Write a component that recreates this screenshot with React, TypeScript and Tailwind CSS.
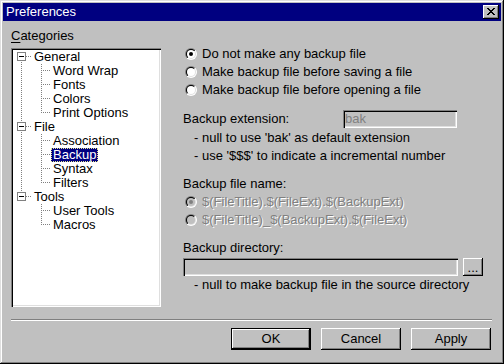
import React from "react";

const sunken =
  "shadow-[inset_1px_1px_#808080,inset_2px_2px_#000,inset_-1px_-1px_#fff,inset_-2px_-2px_#dfdfdf]";
const raised =
  "shadow-[inset_-1px_-1px_#000,inset_1px_1px_#fff,inset_-2px_-2px_#808080]";
const disabledText = "text-[#808080] [text-shadow:1px_1px_0_#fff]";

function Radio({ checked, disabled }: { checked?: boolean; disabled?: boolean }) {
  return (
    <svg width="12" height="12" viewBox="0 0 12 12" className="shrink-0">
      <defs>
        <linearGradient id="rOuter" x1="0" y1="0" x2="1" y2="1">
          <stop offset="0.5" stopColor="#808080" />
          <stop offset="0.5" stopColor="#ffffff" />
        </linearGradient>
        <linearGradient id="rInner" x1="0" y1="0" x2="1" y2="1">
          <stop offset="0.5" stopColor="#000000" />
          <stop offset="0.5" stopColor="#dfdfdf" />
        </linearGradient>
      </defs>
      <circle cx="6" cy="6" r="6" fill="url(#rOuter)" />
      <circle cx="6" cy="6" r="5" fill="url(#rInner)" />
      <circle cx="6" cy="6" r="4" fill={disabled ? "#c0c0c0" : "#ffffff"} />
      {checked && <circle cx="6" cy="6" r="2" fill={disabled ? "#808080" : "#000"} />}
    </svg>
  );
}

function RadioRow({ label, checked, disabled }: { label: string; checked?: boolean; disabled?: boolean }) {
  return (
    <div className="flex h-[18px] items-center gap-[5px] pl-[2px]">
      <Radio checked={checked} disabled={disabled} />
      <span className={disabled ? disabledText : ""}>{label}</span>
    </div>
  );
}

function TopConnector({ first, last }: { first?: boolean; last?: boolean }) {
  return (
    <svg width="19" height="14" className="shrink-0" shapeRendering="crispEdges">
      {!first && <line x1="8.5" y1="0" x2="8.5" y2="2" stroke="#808080" strokeDasharray="1 1" />}
      {!last && <line x1="8.5" y1="12" x2="8.5" y2="14" stroke="#808080" strokeDasharray="1 1" />}
      <rect x="4.5" y="2.5" width="8" height="8" fill="#fff" stroke="#808080" />
      <line x1="6" y1="6.5" x2="11" y2="6.5" stroke="#000" />
      <line x1="13" y1="6.5" x2="18" y2="6.5" stroke="#808080" strokeDasharray="1 1" />
    </svg>
  );
}

function ChildConnector({ through, last }: { through?: boolean; last?: boolean }) {
  return (
    <svg width="38" height="14" className="shrink-0" shapeRendering="crispEdges">
      {through && <line x1="8.5" y1="0" x2="8.5" y2="14" stroke="#808080" strokeDasharray="1 1" />}
      <line x1="28.5" y1="0" x2="28.5" y2={last ? 7 : 14} stroke="#808080" strokeDasharray="1 1" />
      <line x1="30" y1="6.5" x2="38" y2="6.5" stroke="#808080" strokeDasharray="1 1" />
    </svg>
  );
}

function Label({ text, selected }: { text: string; selected?: boolean }) {
  return (
    <span
      className={
        selected
          ? "h-[14px] border border-dotted border-[#e8e890] bg-[#000080] px-[1px] leading-[12px] text-white"
          : "h-[14px] border border-transparent px-[1px] leading-[12px]"
      }
    >
      {text}
    </span>
  );
}

const tree = [
  { name: "General", children: ["Word Wrap", "Fonts", "Colors", "Print Options"] },
  { name: "File", children: ["Association", "Backup", "Syntax", "Filters"] },
  { name: "Tools", children: ["User Tools", "Macros"] },
];

function Tree() {
  return (
    <div className={`h-[259px] bg-white p-[2px] ${sunken}`}>
      {tree.map((g, gi) => {
        const lastGroup = gi === tree.length - 1;
        return (
          <div key={g.name}>
            <div className="flex h-[14px] items-center">
              <TopConnector first={gi === 0} last={lastGroup} />
              <Label text={g.name} />
            </div>
            {g.children.map((c, ci) => (
              <div key={c} className="flex h-[14px] items-center">
                <ChildConnector through={!lastGroup} last={ci === g.children.length - 1} />
                <Label text={c} selected={c === "Backup"} />
              </div>
            ))}
          </div>
        );
      })}
    </div>
  );
}

function Button({ children, def }: { children: React.ReactNode; def?: boolean }) {
  return (
    <div className={`h-[22px] w-[80px] ${def ? "border border-black" : ""}`}>
      <div className={`flex h-full w-full items-center justify-center bg-[#c0c0c0] ${raised}`}>{children}</div>
    </div>
  );
}

export default function App() {
  return (
    <div
      className={`flex h-[364px] w-[504px] flex-col bg-[#c0c0c0] p-[3px] font-['Liberation_Sans',Arial,sans-serif] text-[13px] leading-[18px] text-black shadow-[inset_-1px_-1px_#000,inset_1px_1px_#dfdfdf,inset_-2px_-2px_#808080,inset_2px_2px_#fff]`}
    >
      {/* title bar */}
      <div className="flex h-[18px] items-center justify-between bg-[#000080] pl-[3px] pr-[2px] text-white">
        <span>Preferences</span>
        <div className={`flex h-[14px] w-[16px] items-center justify-center bg-[#c0c0c0] ${raised}`}>
          <svg width="8" height="7" viewBox="0 0 8 7" shapeRendering="crispEdges" className="-mt-px">
            <path
              fill="#000"
              d="M0 0h2v1H0zM6 0h2v1H6zM1 1h2v1H1zM5 1h2v1H5zM2 2h4v1H2zM3 3h2v1H3zM2 4h4v1H2zM1 5h2v1H1zM5 5h2v1H5zM0 6h2v1H0zM6 6h2v1H6z"
            />
          </svg>
        </div>
      </div>

      {/* body */}
      <div className="flex h-[298px] px-[8px]">
        <div className="flex w-[150px] flex-col pt-[6px]">
          <div className="mb-[3px]">
            <span className="underline underline-offset-2">C</span>ategories
          </div>
          <Tree />
        </div>

        <div className="ml-[22px] flex flex-1 flex-col pt-[24px]">
          <RadioRow label="Do not make any backup file" checked />
          <RadioRow label="Make backup file before saving a file" />
          <RadioRow label="Make backup file before opening a file" />

          <div className="mt-[11px] flex h-[18px] items-center">
            <span className="w-[160px]">Backup extension:</span>
            <div className={`flex h-[18px] w-[114px] items-center bg-[#c0c0c0] pl-[2px] text-[#808080] ${sunken}`}>
              bak
            </div>
          </div>
          <div className="mt-[1px] pl-[11px]">- null to use 'bak' as default extension</div>
          <div className="pl-[11px]">- use '$$$' to indicate a incremental number</div>

          <div className="mt-[10px]">Backup file name:</div>
          <RadioRow label="$(FileTitle).$(FileExt).$(BackupExt)" checked disabled />
          <RadioRow label="$(FileTitle)_$(BackupExt).$(FileExt)" disabled />

          <div className="mt-[10px]">Backup directory:</div>
          <div className="mt-[1px] flex items-center gap-[5px]">
            <div className={`h-[18px] w-[275px] bg-[#c0c0c0] ${sunken}`} />
            <div className={`flex h-[18px] w-[20px] items-center justify-center bg-[#c0c0c0] leading-none ${raised}`}>
              ...
            </div>
          </div>
          <div className="pl-[11px]">- null to make backup file in the source directory</div>
        </div>
      </div>

      {/* separator */}
      <div className="ml-[8px] mr-[9px] h-[2px] border-t border-b border-t-[#808080] border-b-white" />

      {/* buttons */}
      <div className="mt-[7px] flex justify-end gap-[10px] pr-[10px]">
        <Button def>OK</Button>
        <Button>Cancel</Button>
        <Button>Apply</Button>
      </div>
    </div>
  );
}
